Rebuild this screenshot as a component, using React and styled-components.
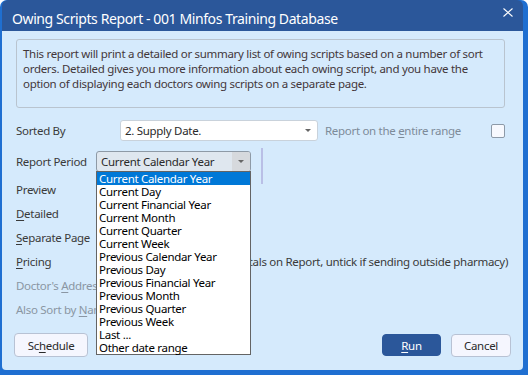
import React from 'react'
import styled, { createGlobalStyle } from 'styled-components'

const GlobalStyle = createGlobalStyle`
  html, body { margin: 0; padding: 0; }
  body {
    font-family: "Noto Sans", "Open Sans", sans-serif;
    background: #ffffff;
  }
`

const Frame = styled.div`
  width: 528px;
  height: 375px;
  box-sizing: border-box;
  background: #1f6fd1;
  border-radius: 7px 7px 0 0;
  padding: 0 5px 5px 2px;
  display: flex;
  flex-direction: column;
  overflow: hidden;
`

const TitleBar = styled.div`
  height: 31px;
  flex: none;
  background: #2b579a;
  color: #ffffff;
  display: flex;
  align-items: center;
  justify-content: space-between;
  padding: 0 10px 0 10px;
  font-size: 14px;
  letter-spacing: -0.4px;
  border-radius: 6px 6px 0 0;
`

const TitleText = styled.span`
  margin-top: 6px;
`

const CloseIcon = styled.svg`
  align-self: flex-start;
  margin-top: 8px;
`

const Body = styled.div`
  flex: 1;
  background: #d5eafc;
  border-radius: 0 0 4px 4px;
  padding: 8px 18px 0 14px;
  display: flex;
  flex-direction: column;
  color: #3a3a3a;
  font-size: 11.5px;
  letter-spacing: -0.3px;
`

const InfoBox = styled.div`
  height: 69px;
  box-sizing: border-box;
  border: 1px solid #b9c4cf;
  border-radius: 3px;
  padding: 6px 6px;
  line-height: 15px;
  color: #43373a;
`

const Row = styled.div`
  display: flex;
  align-items: center;
  height: ${p => p.$h || 24}px;
  margin-top: ${p => p.$mt || 0}px;
  flex: none;
`

const Label = styled.div`
  width: ${p => p.$w || 80}px;
  flex: none;
  color: ${p => (p.$muted ? '#8a96a3' : '#3a3a3a')};
  white-space: nowrap;
`

const Key = styled.span`
  text-decoration: underline;
  text-underline-offset: 2px;
`

const Select = styled.div`
  width: ${p => p.$w}px;
  height: 100%;
  box-sizing: border-box;
  background: ${p => p.$bg || '#ffffff'};
  border: 1px solid ${p => p.$border || '#c9d2db'};
  border-radius: 3px;
  display: flex;
  align-items: center;
  padding-left: 4px;
  color: #2a2a2a;
  position: relative;
  flex: none;
`

const SelectText = styled.span`
  flex: 1;
  white-space: nowrap;
`

const ArrowBox = styled.div`
  width: ${p => p.$w || 18}px;
  align-self: stretch;
  display: flex;
  align-items: center;
  justify-content: center;
  background: ${p => p.$bg || 'transparent'};
  border-radius: 0 2px 2px 0;
`

const Arrow = styled.div`
  width: 0;
  height: 0;
  border-left: 3px solid transparent;
  border-right: 3px solid transparent;
  border-top: 3px solid #666;
`

const SideText = styled.div`
  margin-left: 7px;
  color: #7d8b99;
  flex: 1;
  white-space: nowrap;
`

const Check = styled.div`
  width: 14px;
  height: 14px;
  box-sizing: border-box;
  border: 1px solid #8d9aa8;
  border-radius: 2px;
  background: #f7f9fe;
  flex: none;
  margin-right: ${p => p.$mr || 0}px;
`

const Divider = styled.div`
  width: 2px;
  height: 36px;
  background: #b9bfe6;
  margin-left: 10px;
  align-self: flex-start;
  margin-top: -3px;
`

const List = styled.div`
  position: absolute;
  top: 100%;
  left: -1px;
  width: 155px;
  box-sizing: border-box;
  background: #ffffff;
  border: 1px solid #646464;
  z-index: 5;
`

const Item = styled.div`
  height: 13px;
  line-height: 13px;
  padding-left: 2px;
  white-space: nowrap;
  color: ${p => (p.$active ? '#ffffff' : '#000000')};
  background: ${p => (p.$active ? '#0078d7' : 'transparent')};
`

const Control = styled.div`
  display: flex;
  align-items: center;
  padding-left: ${p => p.$pl || 6}px;
  white-space: nowrap;
`

const Buttons = styled.div`
  display: flex;
  align-items: center;
  margin: 12px -6px 0 -2px;
  height: 24px;
`

const Button = styled.div`
  width: ${p => p.$w}px;
  height: ${p => p.$h || 23}px;
  box-sizing: border-box;
  border-radius: 4px;
  display: flex;
  align-items: center;
  justify-content: center;
  border: 1px solid ${p => (p.$primary ? '#2b579a' : '#b8c2d4')};
  background: ${p => (p.$primary ? '#2b579a' : '#f5f6fe')};
  color: ${p => (p.$primary ? '#ffffff' : '#2a2a2a')};
  margin-left: ${p => p.$ml || 0}px;
`

const Spacer = styled.div`
  flex: 1;
`

const periods = [
  'Current Calendar Year',
  'Current Day',
  'Current Financial Year',
  'Current Month',
  'Current Quarter',
  'Current Week',
  'Previous Calendar Year',
  'Previous Day',
  'Previous Financial Year',
  'Previous Month',
  'Previous Quarter',
  'Previous Week',
  'Last ...',
  'Other date range',
]

export default function App() {
  return (
    <>
      <GlobalStyle />
      <Frame>
        <TitleBar>
          <TitleText>Owing Scripts Report - 001 Minfos Training Database</TitleText>
          <CloseIcon width="10" height="9" viewBox="0 0 10 9">
            <path d="M0.5 0.5 L9.5 8.5 M9.5 0.5 L0.5 8.5" stroke="#ffffff" strokeWidth="1.1" />
          </CloseIcon>
        </TitleBar>
        <Body>
          <InfoBox>
            This report will print a detailed or summary list of owing scripts based on a number of sort
            orders. Detailed gives you more information about each owing script, and you have the
            option of displaying each doctors owing scripts on a separate page.
          </InfoBox>

          <Row $h={21} $mt={12}>
            <Label $w={104}>Sorted By</Label>
            <Select $w={198}>
              <SelectText>2. Supply Date.</SelectText>
              <ArrowBox><Arrow /></ArrowBox>
            </Select>
            <SideText>Report on the <Key>e</Key>ntire range</SideText>
            <Check />
          </Row>

          <Row $h={21} $mt={10}>
            <Label $w={80}>Report Period</Label>
            <Select $w={155} $bg="#dfe7ef" $border="#8e9aa6">
              <SelectText>Current Calendar Year</SelectText>
              <ArrowBox $bg="#d6d9dd"><Arrow /></ArrowBox>
              <List>
                {periods.map((p, i) => (
                  <Item key={p} $active={i === 0}>{p}</Item>
                ))}
              </List>
            </Select>
            <Divider />
          </Row>

          <Row $mt={5}>
            <Label>Preview</Label>
            <Control><Check /></Control>
          </Row>
          <Row>
            <Label><Key>D</Key>etailed</Label>
            <Control><Check /></Control>
          </Row>
          <Row>
            <Label><Key>S</Key>eparate Page</Label>
            <Control><Check /></Control>
          </Row>
          <Row>
            <Label><Key>P</Key>ricing</Label>
            <Control $pl={35}>
              <Check $mr={6} />
              (Print Prices and Totals on Report, untick if sending outside pharmacy)
            </Control>
          </Row>
          <Row>
            <Label $muted>Doctor's <Key>A</Key>ddress</Label>
            <Control><Check /></Control>
          </Row>
          <Row>
            <Label $muted>Also Sort by <Key>N</Key>ame</Label>
            <Control><Check /></Control>
          </Row>

          <Buttons>
            <Button $w={74} $h={24}>Sc<Key>h</Key>edule</Button>
            <Spacer />
            <Button $w={59} $h={22} $primary><Key>R</Key>un</Button>
            <Button $w={60} $ml={10}>Cancel</Button>
          </Buttons>
        </Body>
      </Frame>
    </>
  )
}
